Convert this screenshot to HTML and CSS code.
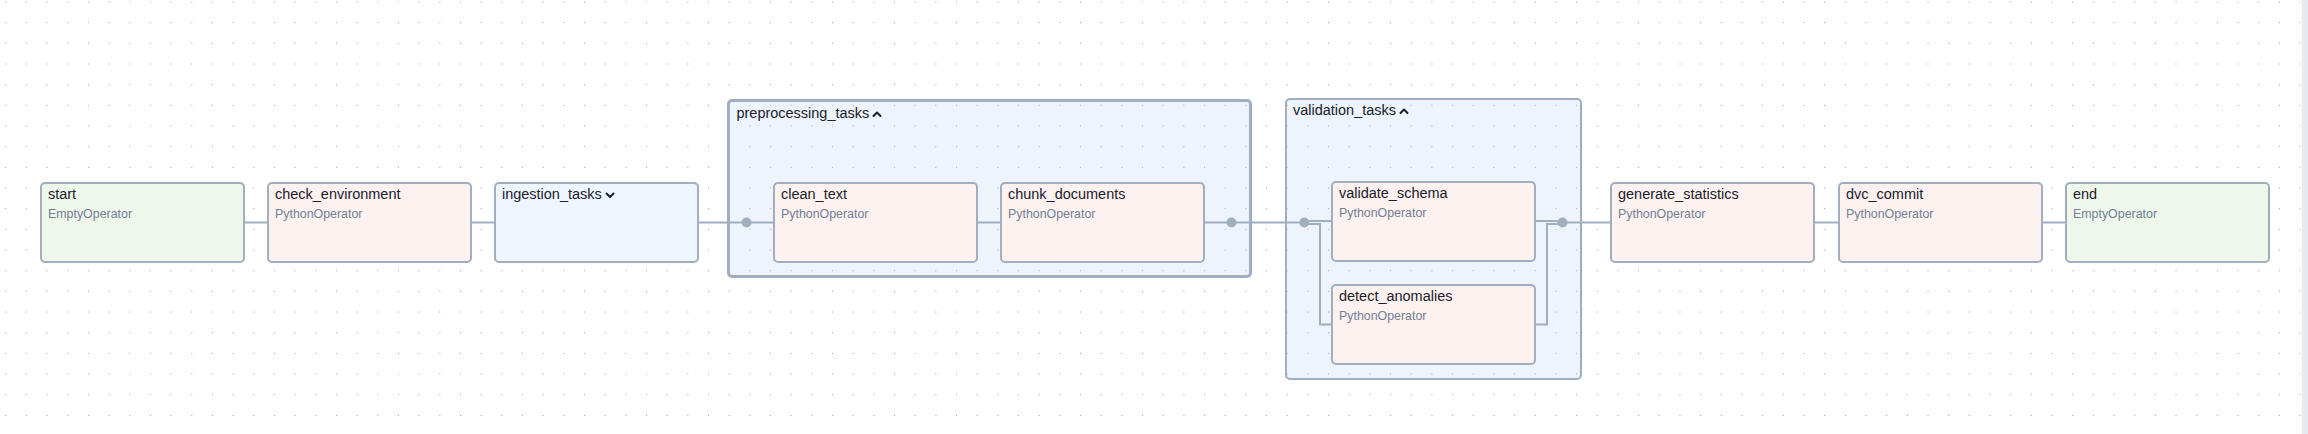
FILE: index.html
```html
<!DOCTYPE html>
<html lang="en">
<head>
    <meta charset="UTF-8">
    <meta name="viewport" content="width=device-width, initial-scale=1.0">
    <title>DAG graph</title>
    <link rel="stylesheet" href="styles.css">
</head>
<body>
    <div class="canvas">
        <svg class="grid" width="2302" height="434">
            <defs>
                <pattern id="dots" x="5.2" y="1.5" width="20.67" height="20.67" patternUnits="userSpaceOnUse">
                    <circle cx="0.5" cy="0.5" r="0.6" fill="#9a9aa2"/>
                </pattern>
            </defs>
            <rect width="2302" height="434" fill="url(#dots)"/>
        </svg>

        <!-- task groups (expanded) -->
        <div class="group group-selected g-preprocessing">
            <div class="group-header">preprocessing_tasks<svg class="chevron" viewBox="0 0 10 6"><polyline points="1.5,5 5,1.5 8.5,5"/></svg></div>
        </div>
        <div class="group g-validation">
            <div class="group-header">validation_tasks<svg class="chevron" viewBox="0 0 10 6"><polyline points="1.5,5 5,1.5 8.5,5"/></svg></div>
        </div>

        <svg class="edges" width="2302" height="434">
            <g class="edge">
                <path d="M245 222.5 H267"/>
                <path d="M472 222.5 H494"/>
                <path d="M699 222.5 H773"/>
                <path d="M978 222.5 H1000"/>
                <path d="M1205 222.5 H1304"/>
                <path d="M1304 221 H1331"/>
                <path d="M1304 224 H1320 V324.5 H1331"/>
                <path d="M1536 221 H1562"/>
                <path d="M1536 324.5 H1547 V224 H1562"/>
                <path d="M1562 222.5 H1610"/>
                <path d="M1815 222.5 H1838"/>
                <path d="M2043 222.5 H2065"/>
            </g>
            <g class="joint">
                <circle cx="746.5" cy="222.5" r="5"/>
                <circle cx="1231.5" cy="222.5" r="5"/>
                <circle cx="1304.3" cy="222.5" r="5"/>
                <circle cx="1562.5" cy="222.5" r="5"/>
            </g>
        </svg>

        <div class="node empty n-start">
            <div class="node-title">start</div>
            <div class="node-type">EmptyOperator</div>
        </div>
        <div class="node python n-check">
            <div class="node-title">check_environment</div>
            <div class="node-type">PythonOperator</div>
        </div>
        <div class="node collapsed n-ingestion">
            <div class="node-title">ingestion_tasks<svg class="chevron" viewBox="0 0 10 6"><polyline points="1.5,1.5 5,5 8.5,1.5"/></svg></div>
        </div>
        <div class="node python n-clean">
            <div class="node-title">clean_text</div>
            <div class="node-type">PythonOperator</div>
        </div>
        <div class="node python n-chunk">
            <div class="node-title">chunk_documents</div>
            <div class="node-type">PythonOperator</div>
        </div>
        <div class="node python n-schema">
            <div class="node-title">validate_schema</div>
            <div class="node-type">PythonOperator</div>
        </div>
        <div class="node python n-anomalies">
            <div class="node-title">detect_anomalies</div>
            <div class="node-type">PythonOperator</div>
        </div>
        <div class="node python n-stats">
            <div class="node-title">generate_statistics</div>
            <div class="node-type">PythonOperator</div>
        </div>
        <div class="node python n-dvc">
            <div class="node-title">dvc_commit</div>
            <div class="node-type">PythonOperator</div>
        </div>
        <div class="node empty n-end">
            <div class="node-title">end</div>
            <div class="node-type">EmptyOperator</div>
        </div>
    </div>
</body>
</html>
```

FILE: styles.css
```css
* {
    margin: 0;
    padding: 0;
    box-sizing: border-box;
}

body {
    font-family: 'Liberation Sans', Arial, sans-serif;
    background: #fff;
    color: #1a202c;
    overflow: hidden;
}

.canvas {
    position: relative;
    width: 2308px;
    height: 434px;
    background: #fff;
    border-right: 6px solid #e6e9ed;
    overflow: hidden;
}

.grid,
.edges {
    position: absolute;
    top: 0;
    left: 0;
}

.edges {
    z-index: 2;
}

.edge path {
    fill: none;
    stroke: #a0aec0;
    stroke-width: 2;
}

.joint circle {
    fill: #a0aec0;
}

/* groups */
.group {
    position: absolute;
    z-index: 1;
    background: rgba(200, 218, 243, 0.3);
    border: 2px solid #a0aec0;
    border-radius: 5px;
}

.group-selected {
    border-width: 3.5px;
}

.group-header {
    padding: 1px 6px 0;
    font-size: 14.47px;
    line-height: 18px;
    color: #1a202c;
    white-space: nowrap;
}

.group-selected .group-header {
    padding-left: 6.5px;
    padding-top: 1.5px;
}

.chevron {
    width: 10px;
    height: 6px;
    margin-left: 3px;
    vertical-align: 1px;
    overflow: visible;
}

.chevron polyline {
    fill: none;
    stroke: #1a202c;
    stroke-width: 2;
    stroke-linecap: round;
    stroke-linejoin: round;
}

.g-preprocessing {
    left: 727px;
    top: 99px;
    width: 525px;
    height: 179px;
}

.g-validation {
    left: 1285px;
    top: 98px;
    width: 297px;
    height: 282px;
}

/* task nodes */
.node {
    position: absolute;
    z-index: 3;
    width: 205px;
    height: 81px;
    padding: 1px 6px 0;
    border: 2px solid #a0aec0;
    border-radius: 5px;
    white-space: nowrap;
}

.node.empty {
    background: #eff7eb;
}

.node.python {
    background: #fdf2ef;
}

.node.collapsed {
    background: #eff6ff;
}

.node-title {
    font-size: 14.47px;
    line-height: 18px;
    color: #1a202c;
}

.node-type {
    margin-top: 3px;
    font-size: 12.4px;
    line-height: 16px;
    color: #718096;
}

.n-start { left: 40px; top: 182px; }
.n-check { left: 267px; top: 182px; }
.n-ingestion { left: 494px; top: 182px; }
.n-clean { left: 773px; top: 182px; }
.n-chunk { left: 1000px; top: 182px; }
.n-schema { left: 1331px; top: 181px; }
.n-anomalies { left: 1331px; top: 284px; }
.n-stats { left: 1610px; top: 182px; }
.n-dvc { left: 1838px; top: 182px; }
.n-end { left: 2065px; top: 182px; }
```
